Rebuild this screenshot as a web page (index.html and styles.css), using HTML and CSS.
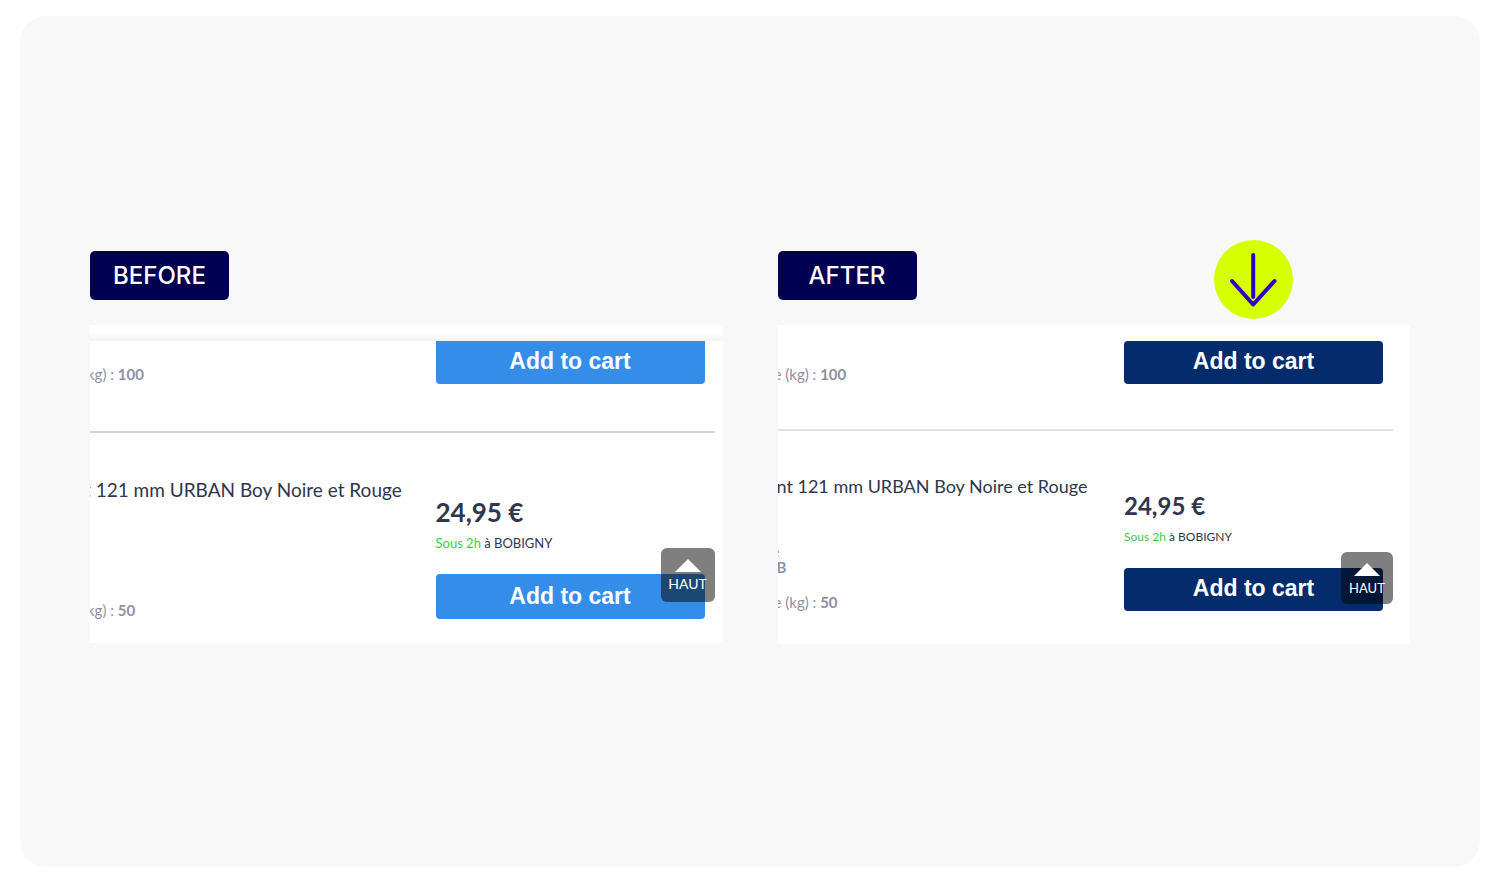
FILE: index.html
```html
<!DOCTYPE html>
<html lang="en">

<head>
    <meta charset="UTF-8">
    <meta name="viewport" content="width=device-width, initial-scale=1.0">
    <title>Add to cart: before / after</title>
    <link rel="stylesheet" href="styles.css">
</head>

<body>
    <main class="board">
        <section class="variant variant--before">
            <div class="variant__head">
                <h2 class="variant__label">BEFORE</h2>
            </div>
            <div class="card">
                <div class="card__shadow"></div>
                <article class="item item--first">
                    <div class="item__info">
                        <p class="item__attr">kg) : <b>100</b></p>
                    </div>
                    <div class="item__buy">
                        <button class="item__button" type="button">Add to cart</button>
                    </div>
                </article>
                <article class="item item--last">
                    <div class="item__info">
                        <h3 class="item__name">t 121 mm URBAN Boy Noire et Rouge</h3>
                        <p class="item__attr">kg) : <b>50</b></p>
                    </div>
                    <div class="item__buy">
                        <p class="item__price">24,95 €</p>
                        <p class="item__stock"><span class="item__delay">Sous 2h</span> à BOBIGNY</p>
                        <button class="item__button" type="button">Add to cart</button>
                    </div>
                </article>
                <a class="top-link" href="#">
                    <svg class="top-link__icon" viewBox="0 0 26 13" aria-hidden="true">
                        <path d="M13 0L26 13H0z" fill="currentColor" />
                    </svg>
                    HAUT
                </a>
            </div>
        </section>

        <section class="variant variant--after">
            <div class="variant__head">
                <h2 class="variant__label">AFTER</h2>
                <div class="variant__pointer">
                    <svg class="variant__arrow" viewBox="0 0 79 79" aria-hidden="true">
                        <circle cx="39.5" cy="39.5" r="39.5" fill="#d6ff00" />
                        <path d="M39.2 15V57M18 41L39.2 64.500L60.500 41" fill="none" stroke="#2e00c2" stroke-width="4" stroke-linecap="round" stroke-linejoin="round" />
                    </svg>
                </div>
            </div>
            <div class="card">
                <div class="card__shadow"></div>
                <article class="item item--first">
                    <div class="item__info">
                        <p class="item__attr">e (kg) : <b>100</b></p>
                    </div>
                    <div class="item__buy">
                        <button class="item__button" type="button">Add to cart</button>
                    </div>
                </article>
                <article class="item item--last">
                    <div class="item__info">
                        <h3 class="item__name">nt 121 mm URBAN Boy Noire et Rouge</h3>
                        <div class="item__attrs">
                            <p class="item__attr item__attr--cut">e</p>
                            <p class="item__attr item__attr--brand"><b>B</b></p>
                            <p class="item__attr">e (kg) : <b>50</b></p>
                        </div>
                    </div>
                    <div class="item__buy">
                        <p class="item__price">24,95 €</p>
                        <p class="item__stock"><span class="item__delay">Sous 2h</span> à BOBIGNY</p>
                        <button class="item__button" type="button">Add to cart</button>
                    </div>
                </article>
                <a class="top-link" href="#">
                    <svg class="top-link__icon" viewBox="0 0 26 13" aria-hidden="true">
                        <path d="M13 0L26 13H0z" fill="currentColor" />
                    </svg>
                    HAUT
                </a>
            </div>
        </section>
    </main>
</body>

</html>
```
FILE: styles.css
```css
* {
    box-sizing: border-box;
}

body {
    margin: 0;
    padding: 16px 20px;
    min-height: 100vh;
    display: flex;
    background: #ffffff;
    color: #2f364d;
    font-family: Lato, "Open Sans", sans-serif;
}

h2,
h3,
p {
    margin: 0;
}

/* board */
.board {
    flex: 1;
    display: grid;
    grid-template-columns: 1fr 1fr;
    gap: 55px;
    align-content: center;
    padding: 0 70px;
    border-radius: 26px;
    background: #f8f8f8;
}

/* variant */
.variant {
    --button: #348ee9;
    --line: #d3d3d9;
    --buy: 269px;
    --edge: 8px;
    --inner: 10px;
    --button-height: 45px;
    --price: 26px;
    --name: 19px;
    --stock: 13px;
    --haut: 14px;
    --box: 54px;
    min-width: 0;
}

.variant--after {
    --button: #042c6c;
    --line: #e0e0e6;
    --buy: 259px;
    --edge: 17px;
    --button-height: 43px;
    --price: 24px;
    --name: 18px;
    --stock: 12px;
    --haut: 13px;
    --box: 52px;
}

.variant__head {
    display: flex;
    justify-content: space-between;
    align-items: flex-start;
    height: 85px;
    padding-right: calc(var(--edge) + var(--inner));
}

.variant__label {
    width: 139px;
    margin-top: 11px;
    padding-top: 1px;
    border-radius: 5px;
    background: #000050;
    color: #ffffff;
    font: 500 24px/48px Inter, sans-serif;
    text-align: center;
}

.variant__pointer {
    display: flex;
    justify-content: center;
    width: var(--buy);
}

.variant__arrow {
    width: 79px;
    height: 79px;
}

/* card */
.card {
    position: relative;
    overflow: hidden;
    background: #ffffff;
}

.card__shadow {
    height: 16px;
}

.variant--before .card__shadow {
    background: linear-gradient(#ffffff 40%, #f3f3f3);
}

/* item */
.item {
    display: flex;
    margin-right: var(--edge);
    padding-right: var(--inner);
}

.item--first {
    padding-bottom: 47px;
    border-bottom: 2px solid var(--line);
}

.variant--after .item--first {
    padding-bottom: 45px;
}

.item--last {
    padding-bottom: 24px;
}

.variant--after .item--last {
    padding-bottom: 33px;
}

.item__info {
    flex: 1;
    display: flex;
    flex-direction: column;
    justify-content: space-between;
    min-width: 0;
    padding-bottom: 1px;
    white-space: nowrap;
}

.item--first .item__info {
    padding-top: 25px;
}

.item--last .item__info {
    padding-top: 45px;
}

.variant--after .item--last .item__info {
    padding-top: 43px;
}

.item__name {
    margin-left: -6px;
    font-size: var(--name);
    font-weight: 400;
    line-height: 24px;
}

.variant--after .item__name {
    margin-left: -1px;
}

.item__attr {
    margin-left: -3px;
    color: #8f90a3;
    font-size: 15px;
    line-height: 16px;
}

.variant--after .item__attr {
    margin-left: -4px;
}

.variant--after .item__attr--cut {
    margin-left: -6px;
}

.variant--after .item__attr--brand {
    margin-left: -1px;
    margin-bottom: 19px;
}

.item__buy {
    display: flex;
    flex-direction: column;
    width: var(--buy);
}

.item--last .item__buy {
    padding-top: 63px;
}

.variant--after .item--last .item__buy {
    padding-top: 59px;
}

.item__price {
    font-size: var(--price);
    font-weight: 700;
    line-height: 32px;
}

.item__stock {
    margin: 5px 0 21px;
    font-size: var(--stock);
    line-height: 20px;
}

.item__delay {
    color: #3ccb46;
}

.item__button {
    height: var(--button-height);
    padding: 0;
    border: 0;
    border-radius: 4px;
    background: var(--button);
    color: #ffffff;
    font: 700 23px/26px "Liberation Sans", Arial, sans-serif;
    cursor: pointer;
}

.variant--after .item__button {
    padding-bottom: 2px;
}

.item--first .item__button {
    height: 43px;
}

.variant--before .item--first .item__button {
    padding-bottom: 3px;
    border-radius: 0 0 4px 4px;
}

/* back to top, floats over the items */
.top-link {
    position: absolute;
    right: var(--edge);
    bottom: 41px;
    display: flex;
    flex-direction: column;
    align-items: center;
    gap: 3px;
    width: var(--box);
    height: var(--box);
    padding-top: 11px;
    border-radius: 6px;
    background: rgba(0, 0, 0, 0.5);
    color: #ffffff;
    font-size: var(--haut);
    line-height: 18px;
    text-decoration: none;
}

.variant--after .top-link {
    bottom: 40px;
}

.top-link__icon {
    width: 26px;
    height: 13px;
}
```
